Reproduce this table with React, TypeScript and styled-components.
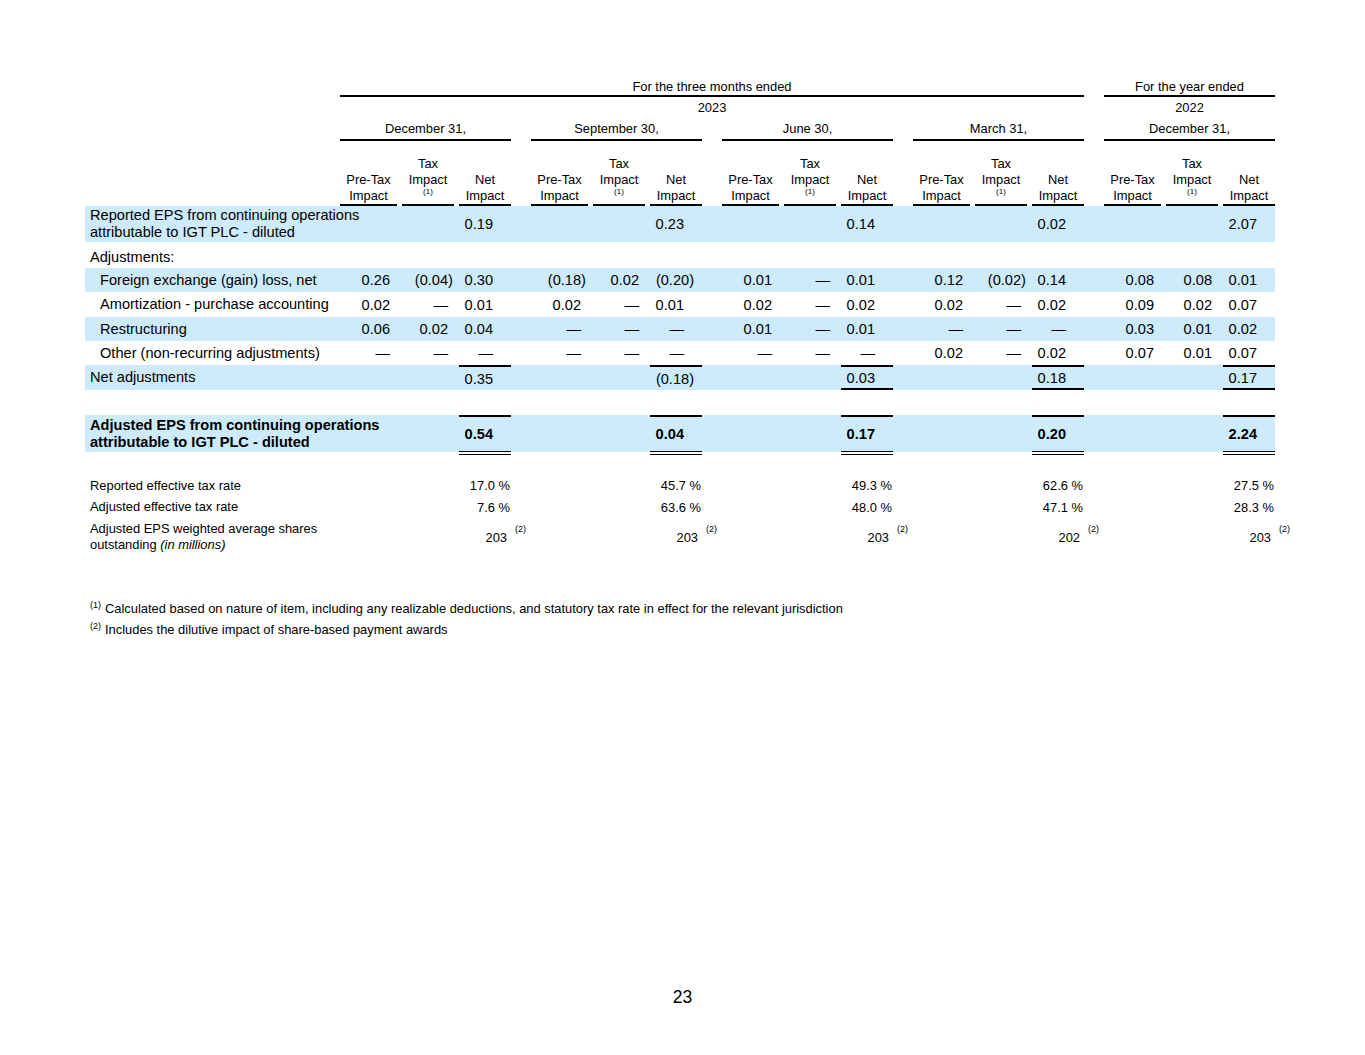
import React from 'react';
import styled, { createGlobalStyle } from 'styled-components';

const Global = createGlobalStyle`
  html, body { margin: 0; padding: 0; background: #fff; }
  body { font-family: "Liberation Sans", Arial, sans-serif; color: #000; }
`;

const BLUE = '#cdebfb';
const COLS = '250px repeat(4, 57px 52px 52px 10px) 57px 52px 52px';

type Kind = 'pre' | 'tax' | 'net';
const KINDS: Kind[] = ['pre', 'tax', 'net'];
const col = (g: number, k: number) => 2 + g * 4 + k;

const Page = styled.div`
  width: 1365px;
  height: 1055px;
  box-sizing: border-box;
  padding: 78px 0 48px 0;
  display: flex;
  flex-direction: column;
`;

const Table = styled.div`
  margin-left: 85px;
  width: 1190px;
  display: flex;
  flex-direction: column;
`;

const Row = styled.div<{ $h: number; $blue?: boolean; $pt?: number }>`
  display: grid;
  grid-template-columns: ${COLS};
  column-gap: 5px;
  height: ${p => p.$h}px;
  box-sizing: border-box;
  padding-top: ${p => p.$pt ?? 0}px;
  align-items: center;
  background: ${p => (p.$blue ? BLUE : 'transparent')};
`;

const SpanHead = styled.div<{ $from: number; $to: number; $line?: boolean }>`
  grid-column: ${p => p.$from} / ${p => p.$to};
  align-self: stretch;
  display: flex;
  align-items: center;
  justify-content: center;
  font-size: 12.9px;
  line-height: 16px;
  white-space: nowrap;
  border-bottom: ${p => (p.$line ? '2px solid #000' : '0')};
`;

const ColHead = styled.div<{ $col: number; $pb?: number }>`
  grid-column: ${p => p.$col};
  align-self: stretch;
  display: flex;
  flex-direction: column;
  justify-content: flex-end;
  align-items: center;
  padding-bottom: ${p => p.$pb ?? 0}px;
  border-bottom: 2px solid #000;
  font-size: 12.9px;
  line-height: 16px;
  white-space: nowrap;
`;

const HeadLine = styled.span`
  display: block;
`;

const HeadSup = styled.span`
  display: block;
  font-size: 8px;
  line-height: 8px;
`;

const Label = styled.div<{ $indent?: boolean; $bold?: boolean; $small?: boolean }>`
  grid-column: 1;
  padding-left: ${p => (p.$indent ? 15 : 5)}px;
  white-space: nowrap;
  font-size: ${p => (p.$small ? 12.9 : 14.6)}px;
  line-height: ${p => (p.$small ? 16 : 17)}px;
  font-weight: ${p => (p.$bold ? 700 : 400)};
  & i { font-style: italic; }
`;

const PAD: Record<Kind, number> = { pre: 7, tax: 6, net: 18 };
const HANG: Record<Kind, number> = { pre: 4.9, tax: 4.9, net: 10 };

const Val = styled.div<{
  $col: number;
  $kind: Kind;
  $bold?: boolean;
  $top?: boolean;
  $bottom?: 'single' | 'double';
  $small?: boolean;
  $pad?: number;
  $over?: number;
}>`
  grid-column: ${p => p.$col};
  align-self: stretch;
  display: flex;
  align-items: center;
  justify-content: flex-end;
  box-sizing: border-box;
  padding-right: ${p => p.$pad ?? PAD[p.$kind]}px;
  font-size: ${p => (p.$small ? 12.9 : 14.6)}px;
  font-weight: ${p => (p.$bold ? 700 : 400)};
  white-space: nowrap;
  border-top: ${p => (p.$top ? '2px solid #000' : '0')};
  border-bottom: ${p =>
    p.$bottom === 'double' ? '4px double #000' : p.$bottom === 'single' ? '2px solid #000' : '0'};
  margin-bottom: ${p => -(p.$over ?? 0)}px;
`;

const Num = styled.span<{ $hang?: number }>`
  margin-right: ${p => -(p.$hang ?? 0)}px;
`;

const Ref = styled.span`
  font-size: 9px;
  line-height: 0;
  vertical-align: 10px;
  margin-left: 8px;
  margin-right: -19px;
`;

const Footnotes = styled.div`
  margin: 43px 0 0 90px;
  font-size: 12.9px;
  line-height: 21px;
`;

const Note = styled.div`
  white-space: nowrap;
`;

const NoteMark = styled.span`
  font-size: 9px;
  vertical-align: 5px;
  line-height: 0;
  margin-right: 4px;
`;

const PageNumber = styled.div`
  margin-top: auto;
  text-align: center;
  font-size: 17.5px;
  line-height: 20px;
`;

type Trip = [string, string, string];

interface DataRow {
  label: React.ReactNode;
  indent?: boolean;
  blue?: boolean;
  h: number;
  pt?: number;
  values: Trip[];
}

const E: Trip = ['', '', ''];

const ROWS: DataRow[] = [
  {
    label: <>Reported EPS from continuing operations<br />attributable to IGT PLC - diluted</>,
    blue: true,
    h: 36,
    values: [['', '', '0.19'], ['', '', '0.23'], ['', '', '0.14'], ['', '', '0.02'], ['', '', '2.07']],
  },
  { label: 'Adjustments:', h: 26, pt: 4, values: [E, E, E, E, E] },
  {
    label: 'Foreign exchange (gain) loss, net',
    indent: true,
    blue: true,
    h: 24,
    values: [
      ['0.26', '(0.04)', '0.30'],
      ['(0.18)', '0.02', '(0.20)'],
      ['0.01', '—', '0.01'],
      ['0.12', '(0.02)', '0.14'],
      ['0.08', '0.08', '0.01'],
    ],
  },
  {
    label: 'Amortization - purchase accounting',
    indent: true,
    h: 25,
    values: [
      ['0.02', '—', '0.01'],
      ['0.02', '—', '0.01'],
      ['0.02', '—', '0.02'],
      ['0.02', '—', '0.02'],
      ['0.09', '0.02', '0.07'],
    ],
  },
  {
    label: 'Restructuring',
    indent: true,
    blue: true,
    h: 24,
    values: [
      ['0.06', '0.02', '0.04'],
      ['—', '—', '—'],
      ['0.01', '—', '0.01'],
      ['—', '—', '—'],
      ['0.03', '0.01', '0.02'],
    ],
  },
  {
    label: 'Other (non-recurring adjustments)',
    indent: true,
    h: 24,
    values: [
      ['—', '—', '—'],
      ['—', '—', '—'],
      ['—', '—', '—'],
      ['0.02', '—', '0.02'],
      ['0.07', '0.01', '0.07'],
    ],
  },
];

const PERIODS = ['December 31,', 'September 30,', 'June 30,', 'March 31,', 'December 31,'];
const NET_ADJ = ['0.35', '(0.18)', '0.03', '0.18', '0.17'];
const ADJ_EPS = ['0.54', '0.04', '0.17', '0.20', '2.24'];
const REP_RATE = ['17.0 %', '45.7 %', '49.3 %', '62.6 %', '27.5 %'];
const ADJ_RATE = ['7.6 %', '63.6 %', '48.0 %', '47.1 %', '28.3 %'];
const SHARES = ['203', '203', '203', '202', '203'];

const renderNum = (v: string, kind: Kind) => {
  if (v.startsWith('(')) return <Num $hang={HANG[kind]}>{v}</Num>;
  return v;
};

export default function App() {
  const groups = [0, 1, 2, 3, 4];
  return (
    <>
      <Global />
      <Page>
        <Table>
          <Row $h={19}>
            <SpanHead $from={2} $to={17} $line>For the three months ended</SpanHead>
            <SpanHead $from={18} $to={21} $line>For the year ended</SpanHead>
          </Row>
          <Row $h={21}>
            <SpanHead $from={2} $to={17}>2023</SpanHead>
            <SpanHead $from={18} $to={21}>2022</SpanHead>
          </Row>
          <Row $h={23}>
            {PERIODS.map((p, g) => (
              <SpanHead key={g} $from={col(g, 0)} $to={col(g, 0) + 3} $line>
                {p}
              </SpanHead>
            ))}
          </Row>
          <Row $h={65}>
            {groups.map(g => (
              <React.Fragment key={g}>
                <ColHead $col={col(g, 0)}>
                  <HeadLine>Pre-Tax</HeadLine>
                  <HeadLine>Impact</HeadLine>
                </ColHead>
                <ColHead $col={col(g, 1)} $pb={8}>
                  <HeadLine>Tax</HeadLine>
                  <HeadLine>Impact</HeadLine>
                  <HeadSup>(1)</HeadSup>
                </ColHead>
                <ColHead $col={col(g, 2)}>
                  <HeadLine>Net</HeadLine>
                  <HeadLine>Impact</HeadLine>
                </ColHead>
              </React.Fragment>
            ))}
          </Row>

          {ROWS.map((r, i) => (
            <Row key={i} $h={r.h} $blue={r.blue} $pt={r.pt}>
              <Label $indent={r.indent}>{r.label}</Label>
              {r.values.map((t, g) =>
                t.map((v, k) =>
                  v ? (
                    <Val key={`${g}-${k}`} $col={col(g, k)} $kind={KINDS[k]}>
                      {renderNum(v, KINDS[k])}
                    </Val>
                  ) : null
                )
              )}
            </Row>
          ))}

          <Row $h={25} $blue>
            <Label>Net adjustments</Label>
            {NET_ADJ.map((v, g) => (
              <Val key={g} $col={col(g, 2)} $kind="net" $top $bottom={g >= 2 ? 'single' : undefined}>
                {renderNum(v, 'net')}
              </Val>
            ))}
          </Row>
          <Row $h={25} />
          <Row $h={37} $blue>
            <Label $bold>
              Adjusted EPS from continuing operations
              <br />
              attributable to IGT PLC - diluted
            </Label>
            {ADJ_EPS.map((v, g) => (
              <Val key={g} $col={col(g, 2)} $kind="net" $bold $top $bottom="double" $over={3}>
                {v}
              </Val>
            ))}
          </Row>
          <Row $h={23} />
          <Row $h={21}>
            <Label $small>Reported effective tax rate</Label>
            {REP_RATE.map((v, g) => (
              <Val key={g} $col={col(g, 2)} $kind="net" $small $pad={1}>
                {v}
              </Val>
            ))}
          </Row>
          <Row $h={22}>
            <Label $small>Adjusted effective tax rate</Label>
            {ADJ_RATE.map((v, g) => (
              <Val key={g} $col={col(g, 2)} $kind="net" $small $pad={1}>
                {v}
              </Val>
            ))}
          </Row>
          <Row $h={37}>
            <Label $small>
              Adjusted EPS weighted average shares
              <br />
              outstanding <i>(in millions)</i>
            </Label>
            {SHARES.map((v, g) => (
              <Val key={g} $col={col(g, 2)} $kind="net" $small $pad={4}>
                <Num>
                  {v}
                  <Ref>(2)</Ref>
                </Num>
              </Val>
            ))}
          </Row>
        </Table>

        <Footnotes>
          <Note>
            <NoteMark>(1)</NoteMark>Calculated based on nature of item, including any realizable deductions, and
            statutory tax rate in effect for the relevant jurisdiction
          </Note>
          <Note>
            <NoteMark>(2)</NoteMark>Includes the dilutive impact of share-based payment awards
          </Note>
        </Footnotes>

        <PageNumber>23</PageNumber>
      </Page>
    </>
  );
}
